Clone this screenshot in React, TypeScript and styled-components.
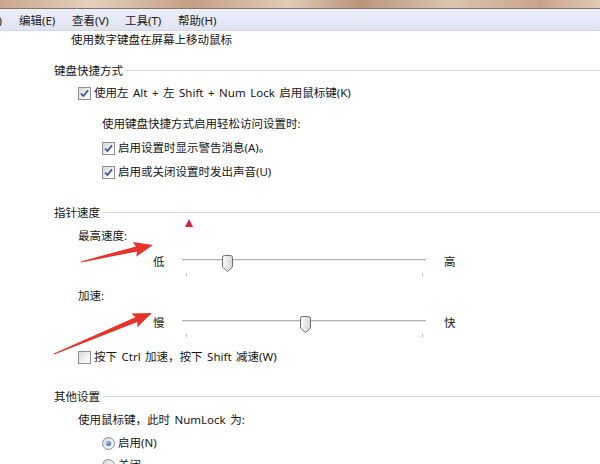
import React, { FC } from 'react';
import styled, { createGlobalStyle } from 'styled-components';

const GlobalStyle = createGlobalStyle`
    body {
        margin: 0;
        background: #ffffff;
        font-family: "Noto Sans", "Noto Sans CJK SC", sans-serif;
        font-size: 11.5px;
        color: #161616;
        word-spacing: 1.5px;
    }
`;

const Page = styled.div`
    position: relative;
    width: 600px;
    height: 464px;
    overflow: hidden;
    background: #ffffff;
`;

const TitleStrip = styled.div`
    height: 8px;
    background: linear-gradient(
        90deg,
        #caa68b 0%,
        #e4d0bd 15%,
        #c39f83 32%,
        #e2cbb6 48%,
        #b99679 60%,
        #dcc4ae 75%,
        #c8a58a 90%,
        #e0c9b3 100%
    );
    border-bottom: 1px solid #857467;
`;

const MenuBar = styled.div`
    display: flex;
    align-items: center;
    gap: 16px;
    height: 21px;
    background: linear-gradient(#eceff9, #dfe3f1);
    border-bottom: 1px solid #d3d8e4;
`;

const MenuItem = styled.span<{ $offset?: number }>`
    margin-left: ${(p) => p.$offset || 0}px;
    white-space: nowrap;
    width: 37px;
    color: #1b1b1b;
`;

const Line = styled.div<{ $indent: number; $top: number }>`
    display: flex;
    align-items: center;
    height: 16px;
    line-height: 16px;
    padding-left: ${(p) => p.$indent}px;
    margin-top: ${(p) => p.$top}px;
    white-space: pre;
`;

const GroupHeader = styled.div<{ $top: number }>`
    display: flex;
    align-items: center;
    height: 16px;
    padding-left: 54px;
    margin-top: ${(p) => p.$top}px;
    white-space: nowrap;

    &::after {
        content: '';
        flex: 1;
        height: 1px;
        margin-left: 2px;
        background: #d5dde3;
        box-shadow: 0 1px 0 #ffffff;
    }
`;

const Box = styled.span`
    display: inline-flex;
    align-items: center;
    justify-content: center;
    box-sizing: border-box;
    width: 13px;
    height: 13px;
    margin-right: 3px;
    border: 1px solid #8e8f8f;
    background: linear-gradient(135deg, #d4d6d8, #f7f7f7 70%, #ffffff);
    flex-shrink: 0;
`;

const RadioCircle = styled.span`
    display: inline-flex;
    align-items: center;
    justify-content: center;
    box-sizing: border-box;
    width: 13px;
    height: 13px;
    margin-right: 3px;
    border: 1px solid #8e8f8f;
    border-radius: 50%;
    background: linear-gradient(135deg, #d4d6d8, #ffffff);
    flex-shrink: 0;
`;

const RadioDot = styled.span`
    width: 5px;
    height: 5px;
    border-radius: 50%;
    background: radial-gradient(circle at 35% 35%, #9cc3ef, #23468f);
`;

const SliderRow = styled.div<{ $top: number }>`
    display: flex;
    align-items: flex-start;
    height: 26px;
    padding-left: 153px;
    margin-top: ${(p) => p.$top}px;
`;

const EndLabel = styled.span`
    width: 12px;
    margin-top: 2px;
    line-height: 16px;
`;

const Track = styled.div`
    position: relative;
    width: 244px;
    height: 26px;
    margin: 0 18px 0 17px;
`;

const Groove = styled.div`
    margin-top: 7px;
    height: 1px;
    background: #b3b3b3;
    border-bottom: 1px solid #e6e6e6;
`;

const Tick = styled.span<{ $x: number }>`
    position: absolute;
    left: ${(p) => p.$x}px;
    top: 21px;
    width: 1px;
    height: 3px;
    background: #b8b8b8;
`;

const Thumb = styled.svg`
    position: absolute;
    top: 3px;
`;

const Overlay = styled.svg`
    position: absolute;
    left: 0;
    top: 0;
    pointer-events: none;
`;

const Marker = styled.span`
    position: absolute;
    left: 185px;
    top: 219px;
    width: 0;
    height: 0;
    border-left: 4.5px solid transparent;
    border-right: 4.5px solid transparent;
    border-bottom: 8px solid #d8213b;
`;

const Check: FC<{ checked?: boolean }> = ({ checked }) => (
    <Box>
        {checked && (
            <svg width="9" height="9" viewBox="0 0 9 9">
                <path d="M1 4.6 L3.4 7 L8 1.4" fill="none" stroke="#3e5590" strokeWidth="1.7" />
            </svg>
        )}
    </Box>
);

const Radio: FC<{ checked?: boolean }> = ({ checked }) => (
    <RadioCircle>{checked && <RadioDot />}</RadioCircle>
);

const Slider: FC<{ low: string; high: string; pos: number; top: number }> = ({ low, high, pos, top }) => (
    <SliderRow $top={top}>
        <EndLabel>{low}</EndLabel>
        <Track>
            <Groove />
            <Tick $x={4} />
            <Tick $x={240} />
            <Thumb width="11" height="17" viewBox="0 0 11 17" style={{ left: pos }}>
                <defs>
                    <linearGradient id="tg" x1="0" y1="0" x2="1" y2="0">
                        <stop offset="0" stopColor="#fbfbfb" />
                        <stop offset="1" stopColor="#d6d6d6" />
                    </linearGradient>
                </defs>
                <path
                    d="M0.5 2.5 Q0.5 0.5 2.5 0.5 L8.5 0.5 Q10.5 0.5 10.5 2.5 L10.5 12 L5.5 16.5 L0.5 12 Z"
                    fill="url(#tg)"
                    stroke="#6f6f6f"
                />
            </Thumb>
        </Track>
        <EndLabel>{high}</EndLabel>
    </SliderRow>
);

// red annotation arrow, tail -> tip
const arrowPoints = (tx: number, ty: number, px: number, py: number) => {
    const dx = px - tx;
    const dy = py - ty;
    const len = Math.hypot(dx, dy);
    const ux = dx / len;
    const uy = dy / len;
    const nx = -uy;
    const ny = ux;
    const headLen = 17;
    const headW = 7.5;
    const shaftW = 2.6;
    const tailW = 0.6;
    const bx = px - ux * headLen;
    const by = py - uy * headLen;
    const pts = [
        [tx + nx * tailW, ty + ny * tailW],
        [bx + nx * shaftW, by + ny * shaftW],
        [bx + nx * headW - ux * 2, by + ny * headW - uy * 2],
        [px, py],
        [bx - nx * headW - ux * 2, by - ny * headW - uy * 2],
        [bx - nx * shaftW, by - ny * shaftW],
        [tx - nx * tailW, ty - ny * tailW],
    ];
    return pts.map((p) => p.join(',')).join(' ');
};

const App: FC = () => (
    <Page>
        <GlobalStyle />
        <TitleStrip />
        <MenuBar>
            <MenuItem $offset={-34}>文件(F)</MenuItem>
            <MenuItem>编辑(E)</MenuItem>
            <MenuItem>查看(V)</MenuItem>
            <MenuItem>工具(T)</MenuItem>
            <MenuItem>帮助(H)</MenuItem>
        </MenuBar>

        <Line $indent={71} $top={1}>使用数字键盘在屏幕上移动鼠标</Line>

        <GroupHeader $top={14}>键盘快捷方式</GroupHeader>
        <Line $indent={78} $top={7}>
            <Check checked />
            使用左 Alt + 左 Shift + Num Lock 启用鼠标键(K)
        </Line>
        <Line $indent={102} $top={15}>使用键盘快捷方式启用轻松访问设置时:</Line>
        <Line $indent={102} $top={8}>
            <Check checked />
            启用设置时显示警告消息(A)。
        </Line>
        <Line $indent={102} $top={8}>
            <Check checked />
            启用或关闭设置时发出声音(U)
        </Line>

        <GroupHeader $top={24}>指针速度</GroupHeader>
        <Line $indent={78} $top={8}>最高速度:</Line>
        <Slider low="低" high="高" pos={40} top={8} />
        <Line $indent={78} $top={10}>加速:</Line>
        <Slider low="慢" high="快" pos={118} top={9} />
        <Line $indent={78} $top={10}>
            <Check />
            按下 Ctrl 加速，按下 Shift 减速(W)
        </Line>

        <GroupHeader $top={23}>其他设置</GroupHeader>
        <Line $indent={78} $top={8}>使用鼠标键，此时 NumLock 为:</Line>
        <Line $indent={102} $top={7}>
            <Radio checked />
            启用(N)
        </Line>
        <Line $indent={102} $top={6}>
            <Radio />
            关闭
        </Line>

        <Marker />
        <Overlay width="600" height="464">
            <polygon points={arrowPoints(81, 262, 153, 245)} fill="#e5352b" />
            <polygon points={arrowPoints(54, 354, 152, 313)} fill="#e5352b" />
        </Overlay>
    </Page>
);

export default App;
